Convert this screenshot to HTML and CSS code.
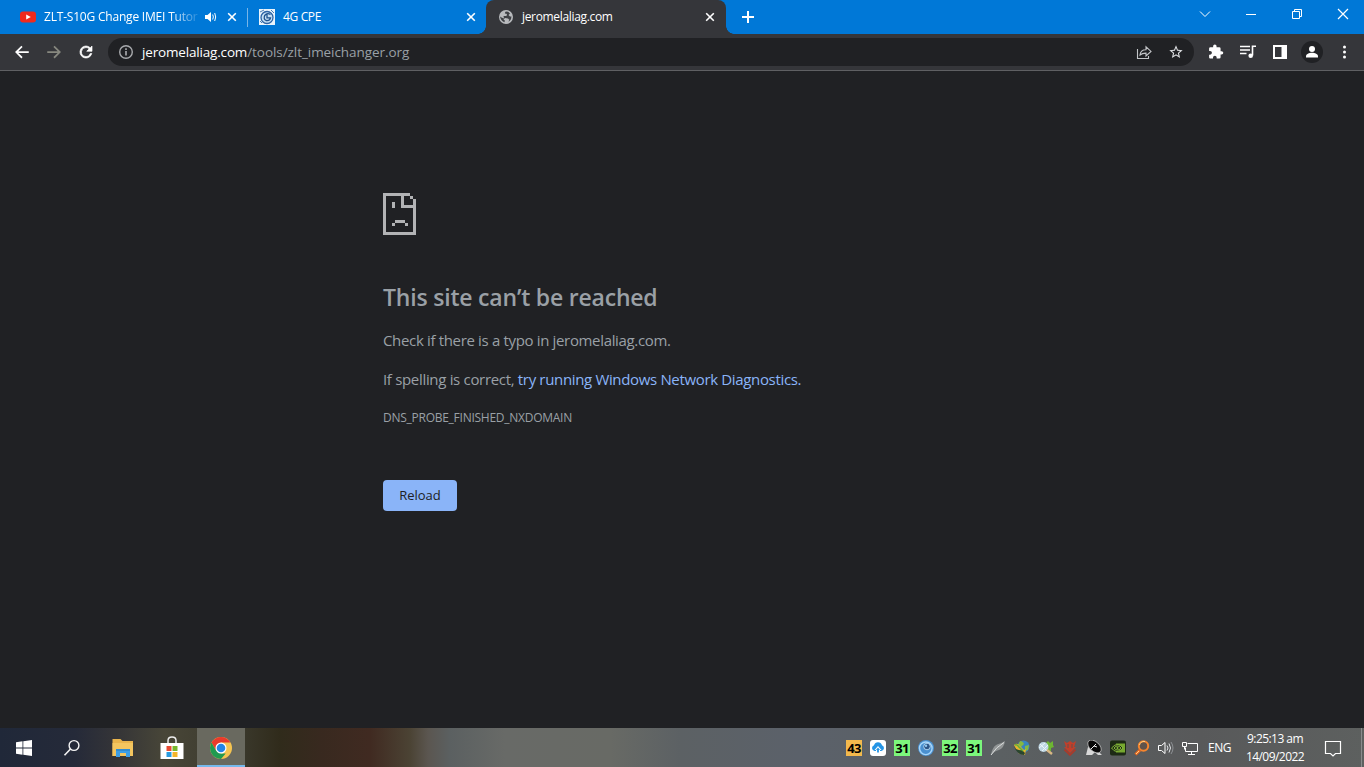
FILE: index.html
```html
<!DOCTYPE html>
<html lang="en">
<head>
<meta charset="utf-8">
<title>jeromelaliag.com</title>
<link rel="stylesheet" href="styles.css">
</head>
<body>
<div class="screen">
  <header class="tabstrip">
    <div class="tab tab-first">
      <svg class="favicon" viewBox="0 0 16 16"><rect y="2.5" width="16" height="11" rx="3" fill="#f02a1d"/><path d="M6.2 5.5v5L10.8 8z" fill="#fff"/></svg>
      <span class="tab-title fade t1">ZLT-S10G Change IMEI Tutor</span>
      <svg class="audio" viewBox="0 0 12 12"><path d="M0 4h2.5L6 1v10L2.5 8H0z" fill="#fff"/><path d="M7.7 3.5q1.3 2.5 0 5M9.7 2q2 4 0 8" stroke="#fff" fill="none"/></svg>
      <svg class="close" viewBox="0 0 10 10"><path d="M1.2 1.2l7.6 7.6M8.8 1.2L1.2 8.8"/></svg>
    </div>
    <div class="tab tab-second">
      <svg class="favicon" viewBox="0 0 16 16"><path fill="#eaf4fc" d="M0 0h16v16H0z"/><circle cx="8" cy="8.5" r="6" fill="#c5dff4" stroke="#2c63a5" stroke-width="1.3"/><path d="M11.500 5.500Q8 3.500 5.700 6.500q-1.500 4 1.500 5 3.500.5 4.300-2.700H8V5" fill="none" stroke="#1d528f" stroke-width="1.300"/><path d="M1 3l4-2M12 1l3 3M3 14l-2-2" stroke="#497db6"/></svg>
      <span class="tab-title t2">4G CPE</span>
      <svg class="close" viewBox="0 0 10 10"><path d="M1.2 1.2l7.600 7.600M8.800 1.200L1.200 8.800"/></svg>
    </div>
    <div class="tab tab-active">
      <svg class="favicon" viewBox="0 0 16 16"><circle cx="8" cy="8" r="7" fill="#b8babd"/><path d="M9 2.500Q6.500 2.500 7 4.500l2 .5-.5 2H5.500L6 9.500 3.500 8.500 2 7.500q.6 4 4.300 5.700l.7-1.400-1.500-1.300L7 9l3 .5 1.500 1.500-1.300 1.500 1.500-.5Q13.500 10 13.500 7.500L12 7.500 10.500 6l1.500-1.500Q10.500 2.500 9 2.500z" fill="#3f4145"/></svg>
      <span class="tab-title t3">jeromelaliag.com</span>
      <svg class="close" viewBox="0 0 10 10"><path d="M1.200 1.200l7.600 7.600M8.800 1.200L1.200 8.800"/></svg>
    </div>
    <svg class="newtab" viewBox="0 0 12 12"><path d="M6 0v12M0 6h12" stroke="#fff" stroke-width="2"/></svg>
    <div class="window-controls">
      <svg viewBox="0 0 46 28"><path d="M18 11.500l5 5 5-5"/></svg>
      <svg viewBox="0 0 46 28"><path d="M18 14.500h10"/></svg>
      <svg viewBox="0 0 46 28"><path d="M18.500 11.500h7v7h-7zM20.500 11.500v-2h7v7h-2"/></svg>
      <svg class="win-close" viewBox="0 0 46 28"><path d="M18 9l10 10M28 9L18 19"/></svg>
    </div>
  </header>
  <nav class="toolbar">
    <svg class="tool back" viewBox="0 0 24 24"><path fill="#fff" d="M21 11H7.100l5.700-5.700L11.200 3.500 2.700 12l8.500 8.500 1.600-1.800L7.100 13.200H21z"/></svg>
    <svg class="tool" viewBox="0 0 24 24"><path fill="#87887f" d="M3 11h13.900l-5.700-5.700 1.600-1.800 8.500 8.500-8.500 8.500-1.600-1.800 5.700-5.500H3z"/></svg>
    <svg class="tool" viewBox="0 0 24 24"><path fill="#fff" stroke="#fff" stroke-width=".9" d="M17.650 6.350A7.960 7.960 0 0 0 12 4a8 8 0 1 0 7.730 10h-2.080A6 6 0 1 1 12 6c1.660 0 3.140.69 4.220 1.780L13 11h7V4z"/></svg>
    <div class="omnibox">
      <svg class="info" viewBox="0 0 16 16"><circle cx="8" cy="8" r="6.300" fill="none" stroke="#a8aaad" stroke-width="1.400"/><path d="M8 7v4.500M8 4.300v1.600" stroke="#b5b7ba" stroke-width="1.500"/></svg>
      <span class="url"><b class="host">jeromelaliag.com</b><span class="path">/tools/zlt_imeichanger.org</span></span>
      <svg class="omni-icon" viewBox="0 0 16 16"><path d="M1.500 5v9.500h11V12M4 11q.4-5.200 6-5.200V2.800l5 4.600-5 4.500V9.100Q6.300 9 4 11z" fill="none" stroke="#c3c5c8" stroke-width="1.100"/></svg>
      <svg class="omni-icon" viewBox="0 0 24 24"><path fill="#dfe1e4" d="M22 9.240l-7.190-.62L12 2 9.190 8.630 2 9.240l5.460 4.730L5.820 21 12 17.270 18.180 21l-1.630-7.030zM12 15.400l-3.760 2.270 1-4.280-3.320-2.880 4.380-.38L12 6.100l1.710 4.040 4.380.38-3.320 2.880 1 4.280z"/></svg>
    </div>
    <svg class="tool" viewBox="0 0 24 24"><path fill="#fff" d="M20.500 11H19V7a2 2 0 0 0-2-2h-4V3.500a2.500 2.500 0 0 0-5 0V5H4a2 2 0 0 0-2 2v3.800h1.500a2.700 2.700 0 0 1 0 5.400H2V20c0 1.100.9 2 2 2h3.800v-1.500a2.700 2.700 0 0 1 5.400 0V22H17a2 2 0 0 0 2-2v-4h1.500a2.500 2.500 0 0 0 0-5z" transform="translate(1 1) scale(.9)"/></svg>
    <svg class="tool" viewBox="0 0 18 18"><path d="M1 3.500h10M1 7h10M1 10.500h6.500" stroke="#fff" stroke-width="1.500"/><path d="M13.500 12.500V3.200H17" fill="none" stroke="#fff" stroke-width="1.600"/><circle cx="11.700" cy="12.700" r="2.300" fill="#fff"/></svg>
    <svg class="tool" viewBox="0 0 18 18"><path fill="#fff" fill-rule="evenodd" d="M2 2h14v14H2zM4 4v10h6.500V4z"/></svg>
    <div class="profile"><svg viewBox="0 0 16 16"><circle cx="8" cy="4.900" r="3" fill="#fff"/><path d="M2 13.500v-1.200C2 10 5 8.800 8 8.800s6 1.200 6 3.500v1.200z" fill="#fff"/></svg></div>
    <svg class="tool" viewBox="0 0 18 18"><g fill="#fff"><circle cx="9.500" cy="4" r="1.500"/><circle cx="9.500" cy="9" r="1.500"/><circle cx="9.500" cy="14" r="1.500"/></g></svg>
  </nav>
  <main class="page">
    <svg class="sad" viewBox="0 0 33 42" shape-rendering="crispEdges"><path fill="#b2b3b5" d="M0 0h27v3H21v9h9V6h3v36H0zM3 3v36h27V15H18V3zM27 3h3v3H27zM9 9h3v6H9zM12 27h10v3H12zM9 30h3v3H9zM22 30h3v3h-3z"/></svg>
    <h1 class="heading"><span>This site can’t be reached</span></h1>
    <p class="line"><span class="check">Check if there is a typo in jeromelaliag.com.</span></p>
    <p class="line"><span class="spelling">If spelling is correct, </span><span class="link">try running Windows Network Diagnostics.</span></p>
    <p class="code"><span>DNS_PROBE_FINISHED_NXDOMAIN</span></p>
    <button class="reload"><span>Reload</span></button>
  </main>
  <footer class="taskbar">
    <div class="launch"><svg width="16" height="16" viewBox="0 0 16 16"><path fill="#fff" d="M0 2.200l6.500-.9v6.200H0zM7.300 1.200L16 0v7.500H7.300zM0 8.400h6.500v6.300L0 13.800zM7.300 8.400H16V16l-8.700-1.200z"/></svg></div>
    <div class="launch"><svg width="18" height="18" viewBox="0 0 18 18"><circle cx="11" cy="6.500" r="4.900" fill="none" stroke="#f4f4f4" stroke-width="1.400"/><path d="M7.500 10L1.500 16.200" stroke="#f4f4f4" stroke-width="1.600"/></svg></div>
    <div class="launch explorer"><svg width="22" height="18" viewBox="0 0 22 18"><path fill="#e9b44c" d="M.5 0h8l2 2h10.500v15H.5z"/><path fill="#f3c55f" d="M.5 4H21v13H.5z"/><path fill="#3d9ee5" d="M4 10h14v8h-4v-4H8v4H4z"/><path d="M4 11h14" stroke="#2578bc"/></svg></div>
    <div class="launch store"><svg width="24" height="24" viewBox="0 0 24 24"><path d="M8 8V4.500Q8 1 12 1t4 3.500V8" fill="none" stroke="#eee" stroke-width="1.500"/><path fill="#fff" d="M.5 7H23.500v16H.5z"/><path fill="#e84a32" d="M6.500 10h5v5h-5z"/><path fill="#77b72d" d="M12.500 10h5v5h-5z"/><path fill="#289be0" d="M6.500 16h5v5h-5z"/><path fill="#f4b52a" d="M12.500 16h5v5h-5z"/></svg></div>
    <div class="launch chrome"><svg width="22" height="22" viewBox="0 0 22 22"><circle cx="11" cy="11" r="11" fill="#f5c451"/><path fill="#e93a2c" d="M1.500 5.500A11 11 0 0 1 20.500 5.500H11L6.200 13.800z"/><path fill="#209a50" d="M1.500 5.500L6.200 13.800 11 16.500h4.700L11 22A11 11 0 0 1 1.500 5.500z"/><circle cx="11" cy="11" r="5.500" fill="#fff"/><circle cx="11" cy="11" r="4.300" fill="#2585e6"/></svg></div>
    <div class="tray">
      <span class="temp amber">43</span>
      <svg viewBox="0 0 16 16"><rect width="16" height="16" rx="3" fill="#fff"/><path d="M5 11H4.600a3 3 0 0 1-.6-5.800 4.200 4.200 0 0 1 8 0 3 3 0 0 1-.6 5.800H11" fill="#2494e5"/><path d="M8 6l3.500 4H10v2H6v-2H4.500z" fill="#fff"/><path d="M8 7.500l2 2.500H8.900v2.500H7.100V10H6z" fill="#2494e5"/></svg>
      <span class="temp">31</span>
      <svg viewBox="0 0 16 16"><circle cx="8" cy="8" r="8" fill="#4a90d0"/><circle cx="7.800" cy="8.300" r="6.300" fill="none" stroke="#a7d6fa" stroke-width="1.400"/><circle cx="9" cy="6.500" r="3.300" fill="#2d5587" stroke="#c8e8ff" stroke-width=".8"/><circle cx="8" cy="5.800" r="1.200" fill="#8ec7f2"/></svg>
      <span class="temp">32</span>
      <span class="temp">31</span>
      <svg viewBox="0 0 16 16"><path d="M1 15Q2 7 7 4.500q4-1 8-3.500-1 7-6 9-5 1-8 5z" fill="#929696"/><path d="M1 15Q6 7 14 2.500" fill="none" stroke="#dadddd"/></svg>
      <svg viewBox="0 0 16 16"><circle cx="9.500" cy="6.500" r="6" fill="#3985bf"/><path d="M6 1q3 0 4 3L7 7 4 5zM11 6l4-1-1 5-3 1z" fill="#86b841"/><path d="M0 5q3-3 6 1l4 4 2-1-1 6-7-2 2-1-4-3z" fill="#e4b52d"/><path d="M0 6q2 5 8 4l3 3-1 2q-7 0-10-9z" fill="#29452e"/><path d="M1 5q2-1 4 2l4 4" fill="none" stroke="#5fae3c" stroke-width="1.500"/></svg>
      <svg viewBox="0 0 16 16"><path d="M8 3l2-2 2 2 3-2v4l1 2-3 1v3l-4-1-2-4z" fill="#6db632"/><circle cx="5.500" cy="7" r="5" fill="#bfd7e4"/><path d="M2 4l7 7M1 8l6-5M4 11l6-6" stroke="#edf6fa"/><path d="M9 10l5 4" stroke="#d8b783" stroke-width="2.500"/></svg>
      <svg viewBox="0 0 16 16"><path d="M2 1l3 2 3-2 3 2 3-2-2 6h2l-6 6-6-6h2z" fill="#c13f2a"/><path d="M2.500 9.500L8 15l5.500-5.500" stroke="#a83b2b" stroke-width="1.800" fill="none"/><path d="M6 4v4M10 4v4" stroke="#67504b"/></svg>
      <svg viewBox="0 0 16 16"><path d="M2 7l-2 8h6l3-3 3 3h4l-5-5z" fill="#d8d8d8"/><ellipse cx="8.500" cy="6.500" rx="8" ry="4.800" transform="rotate(42 8.500 6.500)" fill="#080808" stroke="#ccc" stroke-width=".7"/><path d="M5 9l5-5M8 6l3 1" stroke="#eee"/></svg>
      <svg viewBox="0 0 16 16"><rect y=".5" width="16" height="15" rx="2" fill="#1d2a15"/><path d="M6 3.500h9v9H6z" fill="#76a92f"/><path d="M1.500 8Q5 4 8 4.500q3 .5 5 3.500-3 3.500-6 3.500T1.500 8z" fill="#1d2a15" stroke="#86b83b"/><path d="M4 8q2-2.500 4-2t3 2Q9 10.500 7 10T4 8z" fill="none" stroke="#86b83b"/><circle cx="7.500" cy="8" r="1" fill="#85c232"/></svg>
      <svg viewBox="0 0 16 16"><circle cx="9.500" cy="6" r="4.700" fill="#60534b" stroke="#f6852d" stroke-width="2"/><path d="M6 10l-4.500 4.500" stroke="#e96921" stroke-width="3"/><path d="M5.500 5q1-4 5.500-3.500M5 11l-3 3" stroke="#ffcf83" fill="none"/></svg>
      <svg viewBox="0 0 16 16"><path d="M.5 5.500h3L7 2.500v11l-3.500-3h-3z" fill="none" stroke="#fff"/><path d="M9 5.500q2 2.500 0 5M11 3.500q3 4.500 0 9" fill="none" stroke="#e3e6e9"/><path d="M13 2q4 6 0 12" fill="none" stroke="#8d9093"/></svg>
      <svg viewBox="0 0 16 16"><path d="M5.500 3.500h10v8H3.500V7.500M9.500 12v3M6 14.500h7M.5 2.500h4v4h-4zM2.500 6.500v3" fill="none" stroke="#fff"/></svg>
    </div>
    <span class="lang"><span>ENG</span></span>
    <div class="clock"><span class="time">9:25:13 am</span><span class="date">14/09/2022</span></div>
    <svg class="notice" viewBox="0 0 18 18"><path d="M1.500 2.500h15v12h-5L9 17l-2.500-2.500h-5z" fill="none" stroke="#fff" stroke-width="1.200"/></svg>
    <span class="show-desktop"></span>
  </footer>
</div>
</body>
</html>
```
FILE: styles.css
```css
* { box-sizing: border-box; }
body { margin: 0; overflow: hidden; background: #202124; font-family: "Open Sans", "Noto Sans", sans-serif; }
.screen { width: 1364px; height: 767px; display: flex; flex-direction: column; }
svg { display: block; flex-shrink: 0; }
span, b { white-space: pre; }

.tabstrip { height: 34px; flex-shrink: 0; display: flex; align-items: center; background: #0078d7; color: #fff; }
.tab { height: 34px; display: flex; align-items: center; }
.tab-first { width: 248px; padding: 0 11px 0 20px; background: linear-gradient(#78b5e8, #78b5e8) right center / 1px 19px no-repeat; }
.tab-second { width: 238px; padding: 0 10px 0 11px; }
.tab-active { position: relative; width: 240px; padding: 0 11px 0 12px; background: #35363a; border-radius: 8px 8px 0 0; }
.tab-active::before, .tab-active::after { content: ""; position: absolute; bottom: 0; width: 8px; height: 8px; }
.tab-active::before { left: -8px; background: radial-gradient(circle at 0 0, transparent 7.5px, #35363a 8px); }
.tab-active::after { right: -8px; background: radial-gradient(circle at 100% 0, transparent 7.5px, #35363a 8px); }
.favicon { width: 16px; height: 16px; margin-right: 8px; }
.tab-title { font-size: 12px; line-height: 18px; flex: 1; }
.fade { flex: 0 0 154px; -webkit-mask-image: linear-gradient(90deg, #000 126px, transparent 158px); mask-image: linear-gradient(90deg, #000 126px, transparent 158px); }
.t1 { letter-spacing: -0.2px; }
.t2 { letter-spacing: -0.35px; }
.t3 { letter-spacing: -0.33px; }
.audio { width: 12px; height: 12px; margin-left: 7px; }
.close { width: 10px; height: 10px; margin-left: auto; fill: none; stroke: #fff; stroke-width: 1.6; }
.newtab { width: 12px; height: 12px; margin-left: 16px; }
.window-controls { display: flex; align-self: flex-start; margin-left: auto; fill: none; stroke: #fff; }
.window-controls svg { width: 46px; height: 28px; }
.window-controls .win-close { margin-right: -2px; stroke-width: 1.2; }

.toolbar { height: 37px; flex-shrink: 0; display: flex; align-items: center; gap: 14px; padding: 0 11px 1px 13px; background: #35363a; border-bottom: 1px solid #5f6063; }
.tool { width: 18px; height: 18px; }
.omnibox { flex: 1; height: 28px; display: flex; align-items: center; margin: 0 -1px; padding: 0 10px; gap: 16px; border-radius: 14px; background: #202124; }
.info { width: 16px; height: 16px; margin-right: -8px; }
.url { flex: 1; font-size: 13.5px; line-height: 20px; }
.host { font-weight: 400; color: #fff; letter-spacing: -0.17px; }
.path { color: #9aa0a6; letter-spacing: -0.06px; }
.omni-icon { width: 16px; height: 16px; }
.profile { width: 22px; height: 22px; margin: 0 -2px; border-radius: 50%; background: #202124; display: grid; place-items: center; }
.profile svg { width: 16px; height: 16px; }

.page { flex: 1; padding: 122px 0 0 383px; background: #202124; color: #9aa0a6; }
.sad { width: 33px; height: 42px; }
.heading { margin: 47px 0 0; font-size: 23px; font-weight: 600; line-height: 30px; letter-spacing: -0.2px; }
.line { margin: 17px 0 0; font-size: 15px; line-height: 22px; }
.check { letter-spacing: -0.34px; }
.spelling { letter-spacing: -0.32px; }
.link { color: #8ab4f8; letter-spacing: -0.34px; }
.code { margin: 18px 0 0; font-size: 12px; line-height: 20px; letter-spacing: -0.26px; }
.reload { display: block; width: 74px; height: 31px; margin-top: 52px; padding: 0; border: 0; border-radius: 4px; background: #8ab4f8; color: #202124; font: 13px/31px "Open Sans", sans-serif; }

.taskbar { height: 39px; flex-shrink: 0; display: flex; align-items: center; color: #fff; background: linear-gradient(90deg, #202839 0, #252a39 75px, #343437 115px, #484638 165px, #39372a 245px, #302b1b 280px, #38291f 320px, #402a21 370px, #4b4334 410px, #5b5650 428px, #5b6061 450px, #686a67 505px, #686a65 610px, #5c6164 680px, #5b616a 800px, #5b6062 1000px, #58595a 1200px, #5d605f 1364px); }
.launch { width: 48px; height: 39px; display: grid; place-items: center; }
.explorer { width: 50px; padding-left: 3px; }
.store { width: 51px; }
.chrome { background: #69695f; border-bottom: 2px solid #76b9ed; padding-top: 2px; }
.tray { display: flex; gap: 8px; margin-left: 601px; }
.tray svg { width: 16px; height: 16px; }
.temp { width: 16px; height: 16px; background: #7cf77c; color: #000; font: 700 13px/16px "Open Sans", sans-serif; letter-spacing: -0.6px; text-align: center; }
.amber { background: #f4b94d; }
.lang { margin-left: 10px; width: 24px; font-size: 12px; letter-spacing: -0.5px; }
.clock { width: 70px; margin-left: 8px; display: flex; flex-direction: column; align-items: center; font-size: 12px; line-height: 18px; }
.time { letter-spacing: -0.55px; }
.date { letter-spacing: -0.55px; }
.notice { width: 18px; height: 18px; margin-left: 14px; }
.show-desktop { width: 1px; height: 39px; margin-left: auto; margin-right: 2px; background: #898b8c; }
```
